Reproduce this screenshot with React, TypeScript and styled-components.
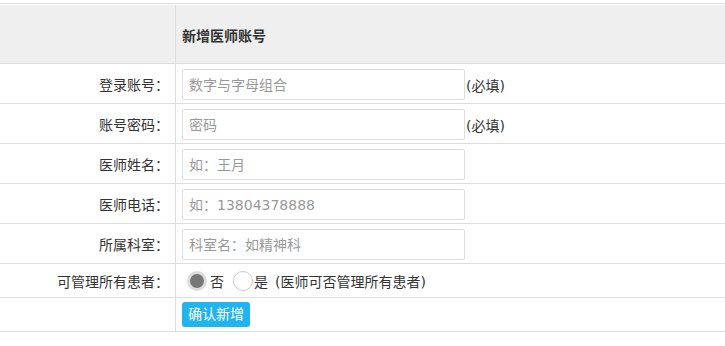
import styled, { createGlobalStyle } from "styled-components";

const GlobalStyle = createGlobalStyle`
  body {
    margin: 0;
    background: #fff;
    font-family: "DejaVu Sans", "Noto Sans CJK SC", sans-serif;
    font-size: 14px;
    color: #333;
  }
`;

const Form = styled.div`
  margin-top: 3px;
  border-top: 1px solid #ddd;
  padding-top: 1px;
`;

const Row = styled.div<{ $h: number; $head?: boolean }>`
  display: grid;
  grid-template-columns: 176px 1fr;
  height: ${(p) => p.$h}px;
  border-bottom: 1px solid #ddd;
  box-sizing: border-box;
  background: ${(p) => (p.$head ? "#efefef" : "#fff")};
`;

const Label = styled.div`
  display: flex;
  align-items: center;
  justify-content: flex-end;
  padding-right: 6px;
  border-right: 1px solid #ddd;
  white-space: nowrap;
`;

const Field = styled.div`
  display: flex;
  align-items: center;
  padding-left: 6px;
  white-space: nowrap;
`;

const Title = styled.span`
  font-weight: bold;
  padding-top: 1px;
`;

const Input = styled.input`
  box-sizing: border-box;
  width: 283px;
  height: 31px;
  margin-top: 2px;
  border: 1px solid #ddd;
  border-radius: 2px;
  padding: 0 6px;
  font-family: inherit;
  font-size: 14px;
  color: #333;
  outline: none;
  &::placeholder {
    color: #999;
  }
`;

const Note = styled.span`
  margin-left: 1px;
  padding-top: 2px;
`;

const Radio = styled.span<{ $on?: boolean }>`
  box-sizing: border-box;
  width: 20px;
  height: 20px;
  border-radius: 50%;
  margin: 0 ${(p) => (p.$on ? "3px 0 5px" : "1px 0 9px")};
  background: ${(p) => (p.$on ? "#777" : "#fff")};
  border: ${(p) => (p.$on ? "3px solid #ddd" : "1px solid #ccc")};
`;

const Hint = styled.span`
  margin-left: 7px;
`;

const Button = styled.button`
  height: 25px;
  padding: 0 6px;
  border: none;
  border-radius: 3px;
  background: #22b4ef;
  color: #fff;
  font-family: inherit;
  font-size: 14px;
  line-height: 25px;
`;

const fields = [
  { label: "登录账号：", ph: "数字与字母组合", req: true },
  { label: "账号密码：", ph: "密码", req: true },
  { label: "医师姓名：", ph: "如：王月" },
  { label: "医师电话：", ph: "如：13804378888" },
  { label: "所属科室：", ph: "科室名：如精神科" },
];

export default function App() {
  return (
    <>
      <GlobalStyle />
      <Form>
        <Row $h={59} $head>
          <Label />
          <Field>
            <Title>新增医师账号</Title>
          </Field>
        </Row>
        {fields.map((f) => (
          <Row $h={40} key={f.label}>
            <Label>{f.label}</Label>
            <Field>
              <Input placeholder={f.ph} />
              {f.req && <Note>(必填)</Note>}
            </Field>
          </Row>
        ))}
        <Row $h={34}>
          <Label>可管理所有患者：</Label>
          <Field>
            <Radio $on />
            否
            <Radio />
            是<Hint>(医师可否管理所有患者)</Hint>
          </Field>
        </Row>
        <Row $h={34}>
          <Label />
          <Field>
            <Button>确认新增</Button>
          </Field>
        </Row>
      </Form>
    </>
  );
}
